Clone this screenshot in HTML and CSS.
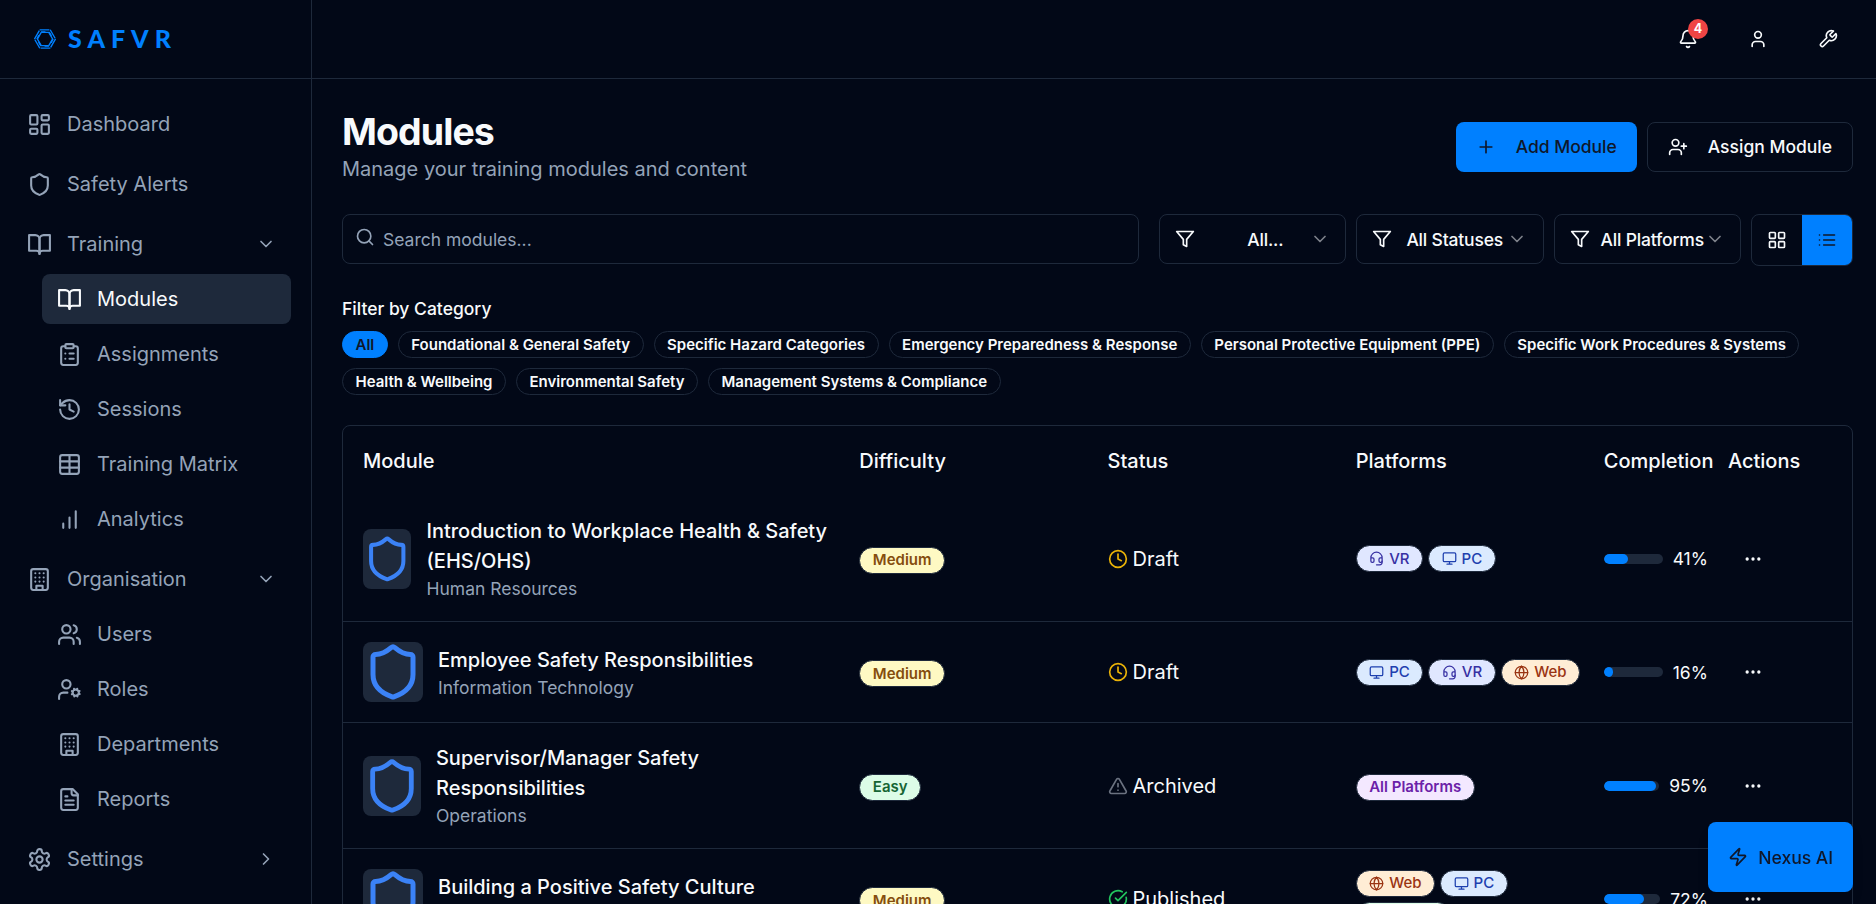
FILE: index.html
```html
<!DOCTYPE html>
<html lang="en">
<head>
  <meta charset="UTF-8" />
  <title>SAFVR - Modules</title>
  <link rel="stylesheet" href="styles.css">
</head>
<body>
  <!-- shared icons -->
  <svg class="sprite" xmlns="http://www.w3.org/2000/svg">
    <symbol id="i-dashboard" viewBox="0 0 24 24"><rect width="7" height="9" x="3" y="3" rx="1"/><rect width="7" height="5" x="14" y="3" rx="1"/><rect width="7" height="9" x="14" y="12" rx="1"/><rect width="7" height="5" x="3" y="16" rx="1"/></symbol>
    <symbol id="i-shield" viewBox="0 0 24 24"><path d="M20 13c0 5-3.5 7.5-7.66 8.95a1 1 0 0 1-.67-.01C7.5 20.5 4 18 4 13V6a1 1 0 0 1 1-1c2 0 4.5-1.2 6.24-2.72a1.17 1.17 0 0 1 1.52 0C14.51 3.81 17 5 19 5a1 1 0 0 1 1 1z"/></symbol>
    <symbol id="i-book" viewBox="0 0 24 24"><path d="M2 3h6a4 4 0 0 1 4 4v14a3 3 0 0 0-3-3H2z"/><path d="M22 3h-6a4 4 0 0 0-4 4v14a3 3 0 0 1 3-3h7z"/></symbol>
    <symbol id="i-down" viewBox="0 0 24 24"><path d="m6 9 6 6 6-6"/></symbol>
    <symbol id="i-right" viewBox="0 0 24 24"><path d="m9 18 6-6-6-6"/></symbol>
    <symbol id="i-clipboard" viewBox="0 0 24 24"><rect width="8" height="4" x="8" y="2" rx="1"/><path d="M16 4h2a2 2 0 0 1 2 2v14a2 2 0 0 1-2 2H6a2 2 0 0 1-2-2V6a2 2 0 0 1 2-2h2"/><path d="M12 11h4M12 16h4M8 11h.01M8 16h.01"/></symbol>
    <symbol id="i-history" viewBox="0 0 24 24"><path d="M3 12a9 9 0 1 0 9-9 9.75 9.75 0 0 0-6.74 2.74L3 8"/><path d="M3 3v5h5"/><path d="M12 7v5l4 2"/></symbol>
    <symbol id="i-table" viewBox="0 0 24 24"><path d="M12 3v18"/><rect width="18" height="18" x="3" y="3" rx="2"/><path d="M3 9h18M3 15h18"/></symbol>
    <symbol id="i-chart" viewBox="0 0 24 24"><path d="M12 20V10M18 20V4M6 20v-4"/></symbol>
    <symbol id="i-building" viewBox="0 0 24 24"><rect width="16" height="20" x="4" y="2" rx="2"/><path d="M9 22v-4h6v4M8 6h.01M16 6h.01M12 6h.01M12 10h.01M12 14h.01M16 10h.01M16 14h.01M8 10h.01M8 14h.01"/></symbol>
    <symbol id="i-users" viewBox="0 0 24 24"><path d="M16 21v-2a4 4 0 0 0-4-4H6a4 4 0 0 0-4 4v2"/><circle cx="9" cy="7" r="4"/><path d="M22 21v-2a4 4 0 0 0-3-3.87M16 3.13a4 4 0 0 1 0 7.75"/></symbol>
    <symbol id="i-usercog" viewBox="0 0 24 24"><circle cx="18" cy="15" r="3"/><circle cx="9" cy="7" r="4"/><path d="M10 15H6a4 4 0 0 0-4 4v2"/><path d="m21.7 16.4-.9-.3M15.2 13.9l-.9-.3M16.6 18.7l.3-.9M19.1 12.2l.3-.9M19.6 18.7l-.4-1M16.8 12.3l-.4-1M14.3 16.6l1-.4M20.7 13.8l1-.4"/></symbol>
    <symbol id="i-file" viewBox="0 0 24 24"><path d="M15 2H6a2 2 0 0 0-2 2v16a2 2 0 0 0 2 2h12a2 2 0 0 0 2-2V7Z"/><path d="M14 2v4a2 2 0 0 0 2 2h4M10 9H8M16 13H8M16 17H8"/></symbol>
    <symbol id="i-settings" viewBox="0 0 24 24"><path d="M12.22 2h-.44a2 2 0 0 0-2 2v.18a2 2 0 0 1-1 1.73l-.43.25a2 2 0 0 1-2 0l-.15-.08a2 2 0 0 0-2.73.73l-.22.38a2 2 0 0 0 .73 2.73l.15.1a2 2 0 0 1 1 1.72v.51a2 2 0 0 1-1 1.74l-.15.09a2 2 0 0 0-.73 2.73l.22.38a2 2 0 0 0 2.73.73l.15-.08a2 2 0 0 1 2 0l.43.25a2 2 0 0 1 1 1.73V20a2 2 0 0 0 2 2h.44a2 2 0 0 0 2-2v-.18a2 2 0 0 1 1-1.73l.43-.25a2 2 0 0 1 2 0l.15.08a2 2 0 0 0 2.73-.73l.22-.39a2 2 0 0 0-.73-2.73l-.15-.08a2 2 0 0 1-1-1.74v-.5a2 2 0 0 1 1-1.74l.15-.09a2 2 0 0 0 .73-2.73l-.22-.38a2 2 0 0 0-2.73-.73l-.15.08a2 2 0 0 1-2 0l-.43-.25a2 2 0 0 1-1-1.73V4a2 2 0 0 0-2-2z"/><circle cx="12" cy="12" r="3"/></symbol>
    <symbol id="i-bell" viewBox="0 0 24 24"><path d="M10.268 21a2 2 0 0 0 3.464 0"/><path d="M3.262 15.326A1 1 0 0 0 4 17h16a1 1 0 0 0 .74-1.673C19.41 13.956 18 12.499 18 8A6 6 0 0 0 6 8c0 4.499-1.411 5.956-2.738 7.326"/></symbol>
    <symbol id="i-user" viewBox="0 0 24 24"><path d="M19 21v-2a4 4 0 0 0-4-4H9a4 4 0 0 0-4 4v2"/><circle cx="12" cy="7" r="4"/></symbol>
    <symbol id="i-wrench" viewBox="0 0 24 24"><path d="M14.7 6.3a1 1 0 0 0 0 1.4l1.6 1.6a1 1 0 0 0 1.4 0l3.77-3.77a6 6 0 0 1-7.94 7.94l-6.91 6.91a2.12 2.12 0 0 1-3-3l6.91-6.91a6 6 0 0 1 7.94-7.94l-3.76 3.76z"/></symbol>
    <symbol id="i-plus" viewBox="0 0 24 24"><path d="M5 12h14M12 5v14"/></symbol>
    <symbol id="i-userplus" viewBox="0 0 24 24"><path d="M16 21v-2a4 4 0 0 0-4-4H6a4 4 0 0 0-4 4v2"/><circle cx="9" cy="7" r="4"/><path d="M19 8v6M22 11h-6"/></symbol>
    <symbol id="i-search" viewBox="0 0 24 24"><circle cx="11" cy="11" r="8"/><path d="m21 21-4.3-4.3"/></symbol>
    <symbol id="i-filter" viewBox="0 0 24 24"><path d="M22 3H2l8 9.46V19l4 2v-8.54z"/></symbol>
    <symbol id="i-grid" viewBox="0 0 24 24"><rect width="7" height="7" x="3" y="3" rx="1"/><rect width="7" height="7" x="14" y="3" rx="1"/><rect width="7" height="7" x="14" y="14" rx="1"/><rect width="7" height="7" x="3" y="14" rx="1"/></symbol>
    <symbol id="i-list" viewBox="0 0 24 24"><path d="M3 12h.01M3 18h.01M3 6h.01M8 12h13M8 18h13M8 6h13"/></symbol>
    <symbol id="i-clock" viewBox="0 0 24 24"><circle cx="12" cy="12" r="10"/><path d="M12 6v6l4 2"/></symbol>
    <symbol id="i-alert" viewBox="0 0 24 24"><path d="m21.73 18-8-14a2 2 0 0 0-3.48 0l-8 14A2 2 0 0 0 4 21h16a2 2 0 0 0 1.73-3"/><path d="M12 9v4M12 17h.01"/></symbol>
    <symbol id="i-check" viewBox="0 0 24 24"><path d="M21.801 10A10 10 0 1 1 17 3.335"/><path d="m9 11 3 3L22 4"/></symbol>
    <symbol id="i-headset" viewBox="0 0 24 24"><path d="M3 11h3a2 2 0 0 1 2 2v3a2 2 0 0 1-2 2H5a2 2 0 0 1-2-2zm0 0a9 9 0 1 1 18 0m0 0v5a2 2 0 0 1-2 2h-1a2 2 0 0 1-2-2v-3a2 2 0 0 1 2-2z"/><path d="M21 16v2a4 4 0 0 1-4 4h-5"/></symbol>
    <symbol id="i-monitor" viewBox="0 0 24 24"><rect width="20" height="14" x="2" y="3" rx="2"/><path d="M8 21h8M12 17v4"/></symbol>
    <symbol id="i-globe" viewBox="0 0 24 24"><circle cx="12" cy="12" r="10"/><path d="M12 2a14.5 14.5 0 0 0 0 20 14.5 14.5 0 0 0 0-20M2 12h20"/></symbol>
    <symbol id="i-phone" viewBox="0 0 24 24"><rect width="14" height="20" x="5" y="2" rx="2"/><path d="M12 18h.01"/></symbol>
    <symbol id="i-dots" viewBox="0 0 24 24"><circle cx="12" cy="12" r="1"/><circle cx="19" cy="12" r="1"/><circle cx="5" cy="12" r="1"/></symbol>
    <symbol id="i-zap" viewBox="0 0 24 24"><path d="M4 14a1 1 0 0 1-.78-1.63l9.9-10.2a.5.5 0 0 1 .86.46l-1.92 6.02A1 1 0 0 0 13 10h7a1 1 0 0 1 .78 1.63l-9.9 10.2a.5.5 0 0 1-.86-.46l1.92-6.02A1 1 0 0 0 11 14z"/></symbol>
  </svg>

  <aside class="sidebar">
    <div class="brand">
      <svg class="brand-mark" viewBox="-11 -10 22 20">
        <path id="blade" d="M-5.4 -9.1H4.4M-3.6 -6.6H4.4L6.4 -3.2"/>
        <use href="#blade" transform="rotate(60)"/>
        <use href="#blade" transform="rotate(120)"/>
        <use href="#blade" transform="rotate(180)"/>
        <use href="#blade" transform="rotate(240)"/>
        <use href="#blade" transform="rotate(300)"/>
      </svg>
      <span class="brand-name">SAFVR</span>
    </div>
    <nav class="nav">
      <a class="nav-item"><svg class="icon"><use href="#i-dashboard"/></svg>Dashboard</a>
      <a class="nav-item"><svg class="icon"><use href="#i-shield"/></svg>Safety Alerts</a>
      <div class="nav-group">
        <a class="nav-item"><svg class="icon"><use href="#i-book"/></svg>Training<svg class="icon chevron"><use href="#i-down"/></svg></a>
        <a class="nav-item sub active"><svg class="icon"><use href="#i-book"/></svg>Modules</a>
        <a class="nav-item sub"><svg class="icon"><use href="#i-clipboard"/></svg>Assignments</a>
        <a class="nav-item sub"><svg class="icon"><use href="#i-history"/></svg>Sessions</a>
        <a class="nav-item sub"><svg class="icon"><use href="#i-table"/></svg>Training Matrix</a>
        <a class="nav-item sub"><svg class="icon"><use href="#i-chart"/></svg>Analytics</a>
      </div>
      <div class="nav-group">
        <a class="nav-item"><svg class="icon"><use href="#i-building"/></svg>Organisation<svg class="icon chevron"><use href="#i-down"/></svg></a>
        <a class="nav-item sub"><svg class="icon"><use href="#i-users"/></svg>Users</a>
        <a class="nav-item sub"><svg class="icon"><use href="#i-usercog"/></svg>Roles</a>
        <a class="nav-item sub"><svg class="icon"><use href="#i-building"/></svg>Departments</a>
        <a class="nav-item sub"><svg class="icon"><use href="#i-file"/></svg>Reports</a>
      </div>
      <a class="nav-item"><svg class="icon"><use href="#i-settings"/></svg>Settings<svg class="icon chevron"><use href="#i-right"/></svg></a>
    </nav>
  </aside>

  <div class="page">
    <header class="topbar">
      <button class="icon-btn"><svg class="icon"><use href="#i-bell"/></svg><span class="count">4</span></button>
      <button class="icon-btn"><svg class="icon"><use href="#i-user"/></svg></button>
      <button class="icon-btn"><svg class="icon"><use href="#i-wrench"/></svg></button>
    </header>

    <main class="main">
      <div class="page-head">
        <div>
          <h1>Modules</h1>
          <p class="subtitle">Manage your training modules and content</p>
        </div>
        <div class="actions">
          <button class="btn primary"><svg class="icon"><use href="#i-plus"/></svg>Add Module</button>
          <button class="btn"><svg class="icon"><use href="#i-userplus"/></svg>Assign Module</button>
        </div>
      </div>

      <div class="toolbar">
        <label class="search">
          <svg class="icon"><use href="#i-search"/></svg>
          <input type="text" placeholder="Search modules..." />
        </label>
        <div class="filters">
          <button class="select"><svg class="icon"><use href="#i-filter"/></svg><span class="clipped">All...</span><svg class="icon caret"><use href="#i-down"/></svg></button>
          <button class="select"><svg class="icon"><use href="#i-filter"/></svg><span>All Statuses</span><svg class="icon caret"><use href="#i-down"/></svg></button>
          <button class="select"><svg class="icon"><use href="#i-filter"/></svg><span>All Platforms</span><svg class="icon caret"><use href="#i-down"/></svg></button>
          <div class="view-toggle">
            <button><svg class="icon"><use href="#i-grid"/></svg></button>
            <button class="on"><svg class="icon"><use href="#i-list"/></svg></button>
          </div>
        </div>
      </div>

      <section class="categories">
        <h3>Filter by Category</h3>
        <div class="chips">
          <span class="chip on">All</span>
          <span class="chip">Foundational &amp; General Safety</span>
          <span class="chip">Specific Hazard Categories</span>
          <span class="chip">Emergency Preparedness &amp; Response</span>
          <span class="chip">Personal Protective Equipment (PPE)</span>
          <span class="chip">Specific Work Procedures &amp; Systems</span>
          <span class="chip">Health &amp; Wellbeing</span>
          <span class="chip">Environmental Safety</span>
          <span class="chip">Management Systems &amp; Compliance</span>
        </div>
      </section>

      <div class="table">
        <div class="row head">
          <div>Module</div>
          <div>Difficulty</div>
          <div>Status</div>
          <div>Platforms</div>
          <div>Completion</div>
          <div>Actions</div>
        </div>

        <div class="row">
          <div class="module">
            <div class="thumb"><svg class="icon"><use href="#i-shield"/></svg></div>
            <div><div class="name">Introduction to Workplace Health &amp; Safety (EHS/OHS)</div><div class="dept">Human Resources</div></div>
          </div>
          <div><span class="chip medium">Medium</span></div>
          <div class="status"><svg class="icon draft"><use href="#i-clock"/></svg>Draft</div>
          <div class="platforms">
            <span class="chip vr"><svg class="icon"><use href="#i-headset"/></svg>VR</span>
            <span class="chip pc"><svg class="icon"><use href="#i-monitor"/></svg>PC</span>
          </div>
          <div class="completion"><div class="bar"><div class="fill" style="width: 41%"></div></div>41%</div>
          <button class="icon-btn"><svg class="icon"><use href="#i-dots"/></svg></button>
        </div>

        <div class="row">
          <div class="module">
            <div class="thumb"><svg class="icon"><use href="#i-shield"/></svg></div>
            <div><div class="name">Employee Safety Responsibilities</div><div class="dept">Information Technology</div></div>
          </div>
          <div><span class="chip medium">Medium</span></div>
          <div class="status"><svg class="icon draft"><use href="#i-clock"/></svg>Draft</div>
          <div class="platforms">
            <span class="chip pc"><svg class="icon"><use href="#i-monitor"/></svg>PC</span>
            <span class="chip vr"><svg class="icon"><use href="#i-headset"/></svg>VR</span>
            <span class="chip web"><svg class="icon"><use href="#i-globe"/></svg>Web</span>
          </div>
          <div class="completion"><div class="bar"><div class="fill" style="width: 16%"></div></div>16%</div>
          <button class="icon-btn"><svg class="icon"><use href="#i-dots"/></svg></button>
        </div>

        <div class="row">
          <div class="module">
            <div class="thumb"><svg class="icon"><use href="#i-shield"/></svg></div>
            <div><div class="name">Supervisor/Manager Safety Responsibilities</div><div class="dept">Operations</div></div>
          </div>
          <div><span class="chip easy">Easy</span></div>
          <div class="status"><svg class="icon archived"><use href="#i-alert"/></svg>Archived</div>
          <div><span class="chip all">All Platforms</span></div>
          <div class="completion"><div class="bar"><div class="fill" style="width: 95%"></div></div>95%</div>
          <button class="icon-btn"><svg class="icon"><use href="#i-dots"/></svg></button>
        </div>

        <div class="row">
          <div class="module">
            <div class="thumb"><svg class="icon"><use href="#i-shield"/></svg></div>
            <div><div class="name">Building a Positive Safety Culture</div><div class="dept">Human Resources</div></div>
          </div>
          <div><span class="chip medium">Medium</span></div>
          <div class="status"><svg class="icon published"><use href="#i-check"/></svg>Published</div>
          <div class="platforms">
            <span class="chip web"><svg class="icon"><use href="#i-globe"/></svg>Web</span>
            <span class="chip pc"><svg class="icon"><use href="#i-monitor"/></svg>PC</span>
            <span class="chip mobile"><svg class="icon"><use href="#i-phone"/></svg>Mobile</span>
          </div>
          <div class="completion"><div class="bar"><div class="fill" style="width: 72%"></div></div>72%</div>
          <button class="icon-btn"><svg class="icon"><use href="#i-dots"/></svg></button>
        </div>
      </div>
    </main>
  </div>

  <button class="nexus"><svg class="icon"><use href="#i-zap"/></svg><span>Nexus AI</span></button>
</body>
</html>
```
FILE: styles.css
```css
* {
  box-sizing: border-box;
}

body {
  margin: 0;
  height: 100vh;
  display: flex;
  overflow: hidden;
  background: #020817;
  color: #f8fafc;
  font-family: Inter, "Liberation Sans", sans-serif;
  font-size: 20px;
  line-height: 30px;
}

h1, h3, p {
  margin: 0;
}

button {
  font: inherit;
  color: inherit;
  background: none;
  border: none;
  padding: 0;
  cursor: pointer;
}

.sprite {
  display: none;
}

.icon {
  width: 20px;
  height: 20px;
  flex-shrink: 0;
  fill: none;
  stroke: currentColor;
  stroke-width: 2;
  stroke-linecap: round;
  stroke-linejoin: round;
}

/* sidebar */
.sidebar {
  width: 312px;
  flex-shrink: 0;
  border-right: 1px solid #1e293b;
}

.brand {
  height: 79px;
  padding-left: 34px;
  display: flex;
  align-items: center;
  gap: 12px;
  border-bottom: 1px solid #1e293b;
  color: #0080ff;
}

.brand-mark {
  width: 22px;
  height: 20px;
  fill: none;
  stroke: currentColor;
  stroke-width: 1.4;
}

.brand-name {
  font-family: Lato, sans-serif;
  font-weight: 900;
  font-size: 25px;
  letter-spacing: 6px;
  padding-bottom: 2px;
}

.nav {
  display: flex;
  flex-direction: column;
  gap: 10px;
  padding: 20px 20px 0 12px;
}

.nav-group {
  display: flex;
  flex-direction: column;
  gap: 5px;
}

.nav-item {
  display: flex;
  align-items: center;
  gap: 15px;
  height: 50px;
  padding: 0 15px;
  border-radius: 8px;
  color: #94a3b8;
}

.nav-item .icon {
  width: 25px;
  height: 25px;
}

.nav-item .chevron {
  width: 20px;
  height: 20px;
  margin-left: auto;
}

.nav-item.sub {
  margin-left: 30px;
}

.nav-item.active {
  background: #1e293b;
  color: #f8fafc;
}

/* top bar */
.page {
  flex: 1;
  min-width: 0;
}

.topbar {
  height: 79px;
  padding-right: 23px;
  display: flex;
  justify-content: flex-end;
  align-items: center;
  gap: 20px;
  border-bottom: 1px solid #1e293b;
}

.icon-btn {
  position: relative;
  width: 50px;
  height: 50px;
  display: flex;
  align-items: center;
  justify-content: center;
}

.count {
  position: absolute;
  top: 5px;
  right: 5px;
  width: 20px;
  height: 20px;
  border-radius: 50%;
  background: #ef4444;
  color: #fff;
  font-size: 12.5px;
  font-weight: 700;
  line-height: 20px;
}

.main {
  padding: 30px 23px 0 30px;
  display: flex;
  flex-direction: column;
  gap: 30px;
}

.page-head {
  display: flex;
  justify-content: space-between;
  align-items: center;
}

h1 {
  font-size: 37.5px;
  line-height: 45px;
  font-weight: 700;
  letter-spacing: -0.025em;
}

.subtitle {
  color: #94a3b8;
}

.actions {
  display: flex;
  gap: 10px;
}

.btn {
  display: flex;
  align-items: center;
  gap: 20px;
  height: 50px;
  padding: 0 20px;
  border: 1px solid #1e293b;
  border-radius: 8px;
  font-size: 17.5px;
  font-weight: 500;
}

.btn.primary {
  border: none;
  background: #0080ff;
  color: #0f172a;
}

/* search and filters */
.toolbar {
  display: flex;
  align-items: flex-start;
  gap: 20px;
}

.search {
  flex: 1;
  height: 50px;
  display: flex;
  align-items: center;
  gap: 8px;
  padding-left: 12px;
  border: 1px solid #1e293b;
  border-radius: 8px;
  color: #94a3b8;
}

.search .icon {
  margin-bottom: 4px;
}

.search input {
  flex: 1;
  padding: 2px 0 0;
  border: none;
  outline: none;
  background: none;
  color: #f8fafc;
  font: inherit;
  font-size: 17.5px;
}

.search input::placeholder {
  color: #94a3b8;
}

.filters {
  display: flex;
  align-items: flex-start;
  gap: 10px;
}

.select {
  width: 187.5px;
  height: 50px;
  padding: 0 15px;
  display: flex;
  align-items: center;
  justify-content: space-between;
  border: 1px solid #1e293b;
  border-radius: 8px;
  font-size: 17.5px;
  font-weight: 500;
  white-space: nowrap;
}

.select span {
  padding: 2px 0 0 10px;
  letter-spacing: -0.01em;
}

.select .clipped {
  padding-left: 26px;
}

.caret {
  opacity: 0.5;
}

.view-toggle {
  display: flex;
  border: 1px solid #1e293b;
  border-radius: 8px;
  overflow: hidden;
}

.view-toggle button {
  width: 50px;
  height: 50px;
  display: flex;
  align-items: center;
  justify-content: center;
}

.view-toggle .on {
  background: #0080ff;
  color: #0f172a;
}

/* categories */
h3 {
  font-size: 17.5px;
  line-height: 25px;
  font-weight: 500;
  margin-bottom: 10px;
}

.chips {
  display: flex;
  flex-wrap: wrap;
  gap: 10px;
}

.chip {
  display: inline-flex;
  align-items: center;
  gap: 5px;
  padding: 2.5px 12.5px;
  border: 1px solid #1e293b;
  border-radius: 999px;
  font-size: 15px;
  line-height: 20px;
  font-weight: 600;
  white-space: nowrap;
}

.chip .icon {
  width: 15px;
  height: 15px;
}

.chip.on {
  background: #0080ff;
  border-color: #0080ff;
  color: #0f172a;
}

.chip.medium { background: #fef9c3; color: #854d0e; }
.chip.easy { background: #dcfce7; color: #166534; }
.chip.vr { background: #e0e7ff; color: #3730a3; }
.chip.pc { background: #dbeafe; color: #1e40af; }
.chip.web { background: #ffedd5; color: #9a3412; }
.chip.all { background: #f3e8ff; color: #6b21a8; }
.chip.mobile { background: #dcfce7; color: #166534; }

/* modules table */
.table {
  border: 1px solid #1e293b;
  border-radius: 8px;
}

.row {
  display: grid;
  grid-template-columns: repeat(12, minmax(0, 1fr));
  gap: 20px;
  align-items: center;
  padding: 20px;
  border-bottom: 1px solid #1e293b;
}

.row > :nth-child(1) {
  grid-column: span 4;
}

.row > :nth-child(2),
.row > :nth-child(3),
.row > :nth-child(4) {
  grid-column: span 2;
}

.row.head {
  border-bottom: none;
  font-weight: 500;
}

.module {
  display: flex;
  align-items: center;
  gap: 15px;
}

.thumb {
  width: 60px;
  height: 60px;
  border-radius: 8px;
  background: #1e293b;
  color: #3b82f6;
}

.thumb .icon {
  display: block;
  width: 100%;
  height: 100%;
}

.name {
  font-weight: 500;
}

.dept {
  color: #94a3b8;
  font-size: 17.5px;
  line-height: 25px;
}

.status {
  display: flex;
  align-items: center;
  gap: 5px;
}

.draft { color: #eab308; }
.archived { color: #6b7280; }
.published { color: #22c55e; }

.platforms {
  display: flex;
  flex-wrap: wrap;
  gap: 5px;
}

.platforms .chip {
  font-weight: 500;
}

.completion {
  display: flex;
  align-items: center;
  gap: 10px;
  font-size: 17.5px;
  line-height: 25px;
}

.bar {
  flex: 1;
  height: 10px;
  border-radius: 5px;
  background: #1e293b;
  overflow: hidden;
}

.fill {
  height: 100%;
  border-radius: 5px;
  background: #0080ff;
}

.row .icon-btn {
  margin: -5px 0;
}

/* floating assistant button */
.nexus {
  position: fixed;
  right: 23px;
  bottom: 12px;
  display: flex;
  align-items: center;
  gap: 10px;
  height: 70px;
  padding: 0 20px;
  border-radius: 8px;
  background: #0080ff;
  color: #0f172a;
  font-size: 17.5px;
  font-weight: 500;
  box-shadow: 0 10px 15px -3px rgba(0, 0, 0, 0.1);
}

.nexus span {
  padding-top: 2px;
}
```
